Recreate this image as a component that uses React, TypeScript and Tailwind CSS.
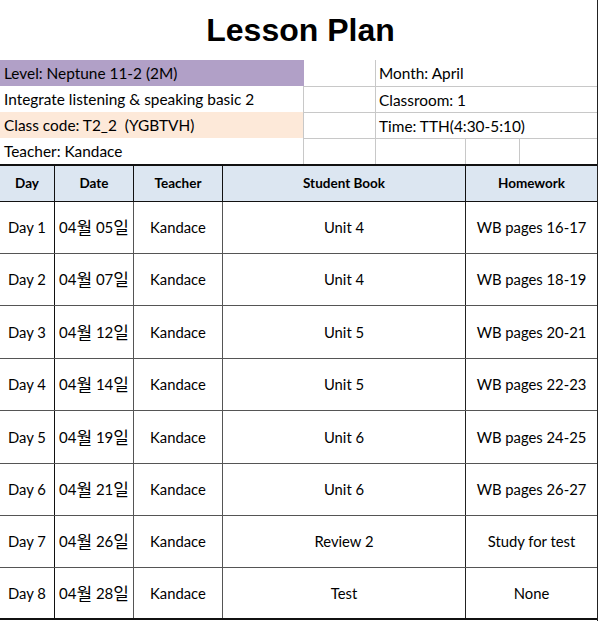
import React from "react";

const rows = [
  ["Day 1", "04", "05", "Kandace", "Unit 4", "WB pages 16-17"],
  ["Day 2", "04", "07", "Kandace", "Unit 4", "WB pages 18-19"],
  ["Day 3", "04", "12", "Kandace", "Unit 5", "WB pages 20-21"],
  ["Day 4", "04", "14", "Kandace", "Unit 5", "WB pages 22-23"],
  ["Day 5", "04", "19", "Kandace", "Unit 6", "WB pages 24-25"],
  ["Day 6", "04", "21", "Kandace", "Unit 6", "WB pages 26-27"],
  ["Day 7", "04", "26", "Kandace", "Review 2", "Study for test"],
  ["Day 8", "04", "28", "Kandace", "Test", "None"],
];

const heights = ["h-[52px]", "h-[52px]", "h-[53px]", "h-[52px]", "h-[53px]", "h-[52px]", "h-[52px]", "h-[52px]"];

export default function App() {
  return (
    <div className="w-[600px] h-[621px] bg-white overflow-hidden font-[Lato,'Noto_Sans_CJK_KR',sans-serif] text-black">
      <div className="w-[598px] h-[621px] border-r border-[#222]">
        <div className="h-[60px] flex items-center justify-center font-['Liberation_Sans',Arial,sans-serif] font-bold text-[32px] pl-[4px]">
          Lesson Plan
        </div>
        {/* info rows */}
        <div className="text-[15.4px]">
          <div className="flex h-[26px]">
            <div className="w-[304px] bg-[#b1a0c7] flex items-center pl-[4px] pt-[2px]">Level: Neptune 11-2 (2M)</div>
            <div className="w-[72px] border-r border-[#c8c8c8]"></div>
            <div className="flex-1 flex items-center pl-[3px] pt-[2px]">Month: April</div>
          </div>
          <div className="flex h-[26px]">
            <div className="w-[304px] flex items-center pl-[4px] pt-[2px] border-r border-[#c8c8c8]">Integrate listening &amp; speaking basic 2</div>
            <div className="w-[72px] border-r border-t border-[#c8c8c8]"></div>
            <div className="flex-1 flex items-center pl-[3px] pt-[2px] border-t border-[#c8c8c8]">Classroom: 1</div>
          </div>
          <div className="flex h-[26px]">
            <div className="w-[304px] bg-[#fde9d9] flex items-center pl-[4px] pt-[2px] border-r border-[#c8c8c8]">Class code: T2_2&nbsp;&nbsp;(YGBTVH)</div>
            <div className="w-[72px] border-r border-t border-[#c8c8c8]"></div>
            <div className="flex-1 flex items-center pl-[3px] pt-[2px] border-t border-[#c8c8c8]">Time: TTH(4:30-5:10)</div>
          </div>
          <div className="flex h-[26px]">
            <div className="w-[304px] flex items-center pl-[4px] pt-[2px] border-r border-[#c8c8c8]">Teacher: Kandace</div>
            <div className="w-[72px] border-r border-t border-[#c8c8c8]"></div>
            <div className="w-[90px] border-r border-t border-[#c8c8c8]"></div>
            <div className="w-[54px] border-r border-t border-[#c8c8c8]"></div>
            <div className="flex-1 border-t border-[#c8c8c8]"></div>
          </div>
        </div>
        {/* table */}
        <div className="grid grid-cols-[55px_79px_89px_243px_1fr] h-[38px] border-t-2 border-b border-[#111] bg-[#dce6f1] font-bold text-[13.5px]">
          <div className="flex items-center justify-center border-r border-[#111]">Day</div>
          <div className="flex items-center justify-center border-r border-[#111]">Date</div>
          <div className="flex items-center justify-center border-r border-[#111]">Teacher</div>
          <div className="flex items-center justify-center border-r border-[#111]">Student Book</div>
          <div className="flex items-center justify-center">Homework</div>
        </div>
        {rows.map((r, i) => (
          <div
            key={i}
            className={`grid grid-cols-[55px_79px_89px_243px_1fr] text-[14.8px] ${heights[i]} ${i === rows.length - 1 ? "border-b-2 border-[#111]" : "border-b border-[#555]"}`}
          >
            <div className="flex items-center justify-center border-r border-[#111]">{r[0]}</div>
            <div className="flex items-center justify-center border-r border-[#555] text-[15px]">
              <span>{r[1]}</span>
              <span className="text-[17px] leading-none">월</span>
              <span>&nbsp;{r[2]}</span>
              <span className="text-[17px] leading-none">일</span>
            </div>
            <div className="flex items-center justify-center border-r border-[#555]">{r[3]}</div>
            <div className="flex items-center justify-center border-r border-[#222]">{r[4]}</div>
            <div className="flex items-center justify-center">{r[5]}</div>
          </div>
        ))}
      </div>
    </div>
  );
}
